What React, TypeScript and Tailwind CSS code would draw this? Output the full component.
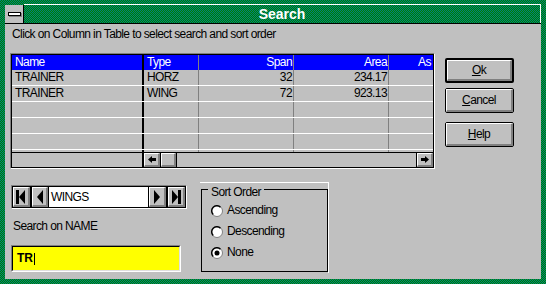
import { ReactNode } from "react";

type RowType = {
  name?: string;
  type?: string;
  span?: string;
  area?: string;
};

const rows: RowType[] = [
  { name: "TRAINER", type: "HORZ", span: "32", area: "234.17" },
  { name: "TRAINER", type: "WING", span: "72", area: "923.13" },
  {},
  {},
  {},
];

// win 3.1 style raised face
function Raised({ children, className = "" }: { children?: ReactNode; className?: string }) {
  return (
    <div
      className={`flex items-center justify-center bg-[#c0c0c0] border-t border-l border-white border-r-2 border-b-2 border-r-[#808080] border-b-[#808080] ${className}`}
    >
      {children}
    </div>
  );
}

function PushButton(props: { first: string; rest: string; isDefault?: boolean }) {
  const { first, rest, isDefault } = props;
  return (
    <div
      className={`w-[69px] h-[25px] rounded-[2px] border-black ${isDefault ? "border-2" : "border"}`}
    >
      <Raised className="w-full h-full">
        <span className="leading-[14px]">
          <span className="underline underline-offset-[1px]">{first}</span>
          {rest}
        </span>
      </Raised>
    </div>
  );
}

function TableRow({ row }: { row: RowType }) {
  return (
    <div className="flex h-[16px] border-b border-white leading-[15px]">
      <div className="w-[132px] shrink-0 border-r-2 border-black pl-[3px]">{row.name}</div>
      <div className="w-[55px] shrink-0 border-r border-[#808080] pl-[3px]">{row.type}</div>
      <div className="w-[95px] shrink-0 border-r border-[#808080] pr-[1px] text-right">{row.span}</div>
      <div className="w-[95px] shrink-0 border-r border-[#808080] pr-[1px] text-right">{row.area}</div>
      <div className="flex-1" />
    </div>
  );
}

function ScrollArrow({ dir }: { dir: "left" | "right" }) {
  return (
    <svg width="8" height="7" viewBox="0 0 8 7">
      {dir === "left" ? (
        <>
          <polygon points="0,3.5 4,0 4,7" fill="#000" />
          <rect x="4" y="2" width="4" height="3" fill="#000" />
        </>
      ) : (
        <>
          <polygon points="8,3.5 4,0 4,7" fill="#000" />
          <rect x="0" y="2" width="4" height="3" fill="#000" />
        </>
      )}
    </svg>
  );
}

function NavGlyph({ kind }: { kind: "first" | "prev" | "next" | "last" }) {
  return (
    <svg width="10" height="14" viewBox="0 0 10 14">
      {kind === "first" && (
        <>
          <rect x="0" y="0" width="3" height="14" fill="#000" />
          <polygon points="3,7 9,0 9,14" fill="#000" />
        </>
      )}
      {kind === "prev" && <polygon points="2,7 8,0 8,14" fill="#000" />}
      {kind === "next" && <polygon points="8,7 2,0 2,14" fill="#000" />}
      {kind === "last" && (
        <>
          <polygon points="7,7 1,0 1,14" fill="#000" />
          <rect x="7" y="0" width="3" height="14" fill="#000" />
        </>
      )}
    </svg>
  );
}

function NavButton({ kind, w }: { kind: "first" | "prev" | "next" | "last"; w: string }) {
  return (
    <div className={`${w} h-full border border-black`}>
      <Raised className="w-full h-full">
        <NavGlyph kind={kind} />
      </Raised>
    </div>
  );
}

function Radio({ label, checked }: { label: string; checked?: boolean }) {
  return (
    <div className="flex items-center h-[15px] pl-[9px] gap-[4px] leading-[15px]">
      <svg width="12" height="12" viewBox="0 0 12 12">
        <circle cx="6" cy="6" r="5.5" fill="#fff" stroke="#808080" />
        <path d="M9.5 2.2 A5 5 0 0 0 2.2 9.5" fill="none" stroke="#000" strokeWidth="1.4" />
        {checked && <circle cx="6" cy="6" r="2.5" fill="#000" />}
      </svg>
      <span>{label}</span>
    </div>
  );
}

function App() {
  return (
    <div
      className="w-[546px] h-[284px] overflow-hidden flex flex-col pt-[4px] px-[5px] pb-[5px] bg-[image:repeating-conic-gradient(#008000_0%_25%,#008080_0%_50%)] bg-[length:2px_2px] text-[12px] tracking-[-0.6px] text-black"
      style={{ fontFamily: '"Liberation Sans", Arial, sans-serif' }}
    >
      {/* title bar */}
      <div className="flex h-[20px] border-b border-black shrink-0">
        <div className="w-[19px] mt-[1px] h-[18px] bg-[#c0c0c0] border-r border-black flex items-center justify-center">
          <div className="w-[13px] h-[4px] bg-white border border-black shadow-[1px_1px_0_#808080]" />
        </div>
        <div className="flex-1 border-t border-r border-white flex items-center justify-center">
          <span className="text-white font-bold text-[14px] tracking-normal leading-[15px]">Search</span>
        </div>
      </div>

      {/* client */}
      <div className="flex-1 bg-[#c0c0c0] flex pl-[5px]">
        <div className="w-[425px] flex flex-col">
          <div className="pt-[3px] pl-[2px] h-[18px] leading-[15px]">
            Click on Column in Table to select search and sort order
          </div>

          {/* grid */}
          <div className="mt-[11px] border-t border-l border-[#808080] border-r border-b border-r-white border-b-white">
            <div className="border border-black h-[114px] flex flex-col">
              <div className="flex h-[15px] bg-[#0000ff] text-white leading-[15px]">
                <div className="w-[132px] shrink-0 border-r-2 border-black pl-[3px]">Name</div>
                <div className="w-[55px] shrink-0 border-r border-[#808080] pl-[3px]">Type</div>
                <div className="w-[95px] shrink-0 border-r border-[#808080] pr-[1px] text-right">Span</div>
                <div className="w-[95px] shrink-0 border-r border-[#808080] pr-[1px] text-right">Area</div>
                <div className="flex-1 whitespace-nowrap pl-[29px]">As</div>
              </div>
              {rows.map((r, i) => (
                <TableRow key={i} row={r} />
              ))}
              <div className="flex h-[2px]">
                <div className="w-[132px] shrink-0 border-r-2 border-black" />
                <div className="w-[55px] shrink-0 border-r border-[#808080]" />
                <div className="w-[95px] shrink-0 border-r border-[#808080]" />
                <div className="w-[95px] shrink-0 border-r border-[#808080]" />
              </div>
              {/* horizontal scrollbar */}
              <div className="flex h-[15px] border-t border-black">
                <div className="w-[132px] shrink-0 border-r-2 border-black" />
                <div className="w-[17px] shrink-0 border-r border-black">
                  <Raised className="w-full h-full">
                    <ScrollArrow dir="left" />
                  </Raised>
                </div>
                <div className="w-[16px] shrink-0 border-r border-black">
                  <Raised className="w-full h-full" />
                </div>
                <div className="flex-1" />
                <div className="w-[17px] shrink-0 border-l border-black">
                  <Raised className="w-full h-full">
                    <ScrollArrow dir="right" />
                  </Raised>
                </div>
              </div>
            </div>
          </div>

          {/* lower part */}
          <div className="flex items-start mt-[13px]">
            <div className="w-[190px] pt-[3px] pl-[1px] flex flex-col">
              <div className="w-[176px] h-[24px] border-t border-l border-[#808080] border-r border-b border-r-white border-b-white flex">
                <NavButton kind="first" w="w-[19px]" />
                <NavButton kind="prev" w="w-[18px]" />
                <div className="flex-1 bg-white border-y border-black pl-[2px] leading-[20px]">WINGS</div>
                <NavButton kind="next" w="w-[19px]" />
                <NavButton kind="last" w="w-[19px]" />
              </div>
              <div className="mt-[10px] pl-[2px] leading-[15px]">Search on NAME</div>
              <div className="mt-[11px] w-[170px] h-[27px] border-t border-l border-[#808080] border-r border-b border-r-white border-b-white">
                <div className="w-full h-full bg-[#ffff00] border-t border-l border-black border-r border-b border-r-[#dfdfdf] border-b-[#dfdfdf] flex items-center pl-[4px]">
                  <span className="font-bold text-[12px] tracking-normal leading-[15px]">TR</span>
                  <span className="inline-block w-[1px] h-[12px] bg-black ml-[1px]" />
                </div>
              </div>
            </div>

            <div className="w-[129px] h-[91px] border-t border-r border-white pl-[1px]">
              <div className="mt-[6px] h-[83px] border border-black">
                <div className="-mt-[4px] ml-[6px] px-[3px] w-fit h-[12px] leading-[12px] bg-[#c0c0c0]">
                  Sort Order
                </div>
                <div className="mt-[5px] flex flex-col gap-[6px]">
                  <Radio label="Ascending" />
                  <Radio label="Descending" />
                  <Radio label="None" checked />
                </div>
              </div>
            </div>
          </div>
        </div>

        {/* buttons */}
        <div className="ml-[10px] pt-[34px] flex flex-col">
          <PushButton first="O" rest="k" isDefault />
          <div className="mt-[5px]">
            <PushButton first="C" rest="ancel" />
          </div>
          <div className="mt-[9px]">
            <PushButton first="H" rest="elp" />
          </div>
        </div>
      </div>
    </div>
  );
}

export default App;
